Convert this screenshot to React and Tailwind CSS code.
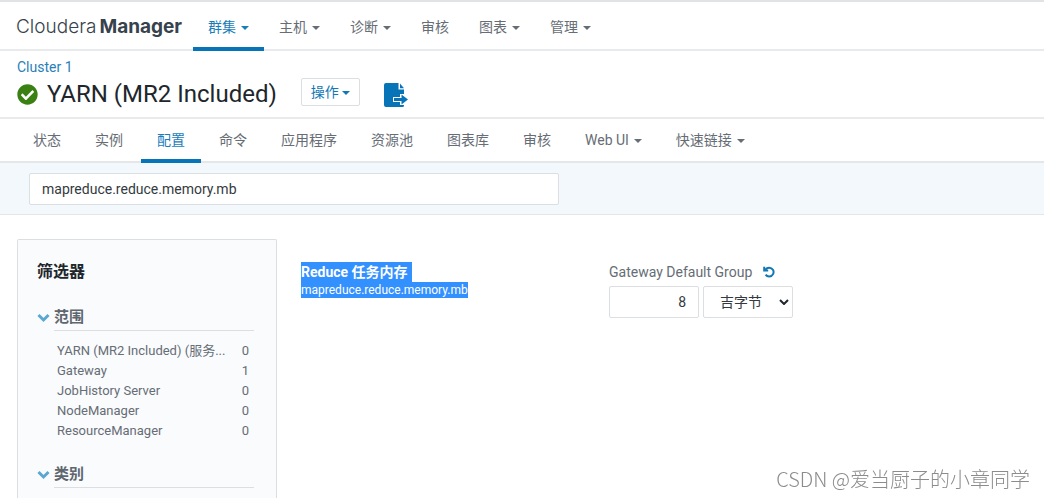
import { FaCheckCircle } from 'react-icons/fa'
import clsx from 'clsx'

const NAV_ITEMS = [
  { label: '群集', menu: true, active: true },
  { label: '主机', menu: true },
  { label: '诊断', menu: true },
  { label: '审核' },
  { label: '图表', menu: true },
  { label: '管理', menu: true },
]

const TABS = [
  { label: '状态' },
  { label: '实例' },
  { label: '配置', active: true },
  { label: '命令' },
  { label: '应用程序' },
  { label: '资源池' },
  { label: '图表库' },
  { label: '审核' },
  { label: 'Web UI', menu: true },
  { label: '快速链接', menu: true },
]

const SCOPES = [
  { label: 'YARN (MR2 Included) (服务...', count: 0 },
  { label: 'Gateway', count: 1 },
  { label: 'JobHistory Server', count: 0 },
  { label: 'NodeManager', count: 0 },
  { label: 'ResourceManager', count: 0 },
]

export default function App() {
  return (
    <div className="flex min-h-screen flex-col border-t-2 border-[#e2e3e4] bg-white font-[Roboto,'Noto_Sans_CJK_SC',sans-serif] text-sm text-[#666d75]">
      <header className="flex h-[49px] items-stretch border-b-2 border-[#e9eaeb] pl-4">
        <a href="#" className="flex w-[177px] shrink-0 items-center gap-[3px] pt-0.5 whitespace-nowrap font-[Inter,sans-serif] text-[19px] text-[#36424c]">
          <span className="font-light">Cloudera</span>
          <span className="font-bold">Manager</span>
        </a>
        <nav className="flex">
          {NAV_ITEMS.map((item) => (
            <NavLink key={item.label} {...item} className="px-[15px] pt-[5px]" />
          ))}
        </nav>
      </header>

      <section className="flex h-[68px] items-start border-b-2 border-[#e9eaeb] pl-[17px]">
        <div>
          <a href="#" className="mt-1.5 block leading-5 text-[#2a7fb8]">Cluster 1</a>
          <h1 className="flex items-center gap-[9px] whitespace-nowrap text-2xl leading-[34px] text-[#20262b]">
            <FaCheckCircle className="size-[21px] text-[#3b8012]" />
            YARN (MR2 Included)
          </h1>
        </div>
        <button className="mt-[27px] ml-6 flex h-7 items-center gap-[3px] rounded-xs border border-[#dcdfe2] px-[9px] text-[#1277b5]">
          操作 <Caret />
        </button>
        <button aria-label="导出" className="mt-8 ml-6">
          <ExportIcon />
        </button>
      </section>

      <nav className="flex h-11 gap-0.5 border-b-2 border-[#e4e6e8] pl-[17px]">
        {TABS.map((tab) => (
          <NavLink key={tab.label} {...tab} className="px-4 pt-0.5" />
        ))}
      </nav>

      <div className="border-b border-[#e2e7ea] bg-[#f3f8fc] px-[29px] pt-[10px] pb-[9px]">
        <input
          aria-label="搜索"
          defaultValue="mapreduce.reduce.memory.mb"
          className="block h-8 w-full max-w-[530px] rounded-xs border border-[#dcdfe2] bg-white px-3 text-[#343a40] outline-none"
        />
      </div>

      <main className="flex flex-1 items-stretch pt-6 pl-[17px]">
        <aside className="w-[260px] shrink-0 rounded-t-xs border border-b-0 border-[#dcdfe2] bg-[#fafbfd] pt-5 pr-[22px] pl-[19px]">
          <h2 className="text-base leading-6 font-bold text-[#20262b]">筛选器</h2>
          <FilterGroup title="范围">
            {SCOPES.map((s) => (
              <li key={s.label} className="flex justify-between leading-5">
                <span className="whitespace-nowrap">{s.label}</span>
                <span>{s.count}</span>
              </li>
            ))}
          </FilterGroup>
          <FilterGroup title="类别" />
        </aside>

        <section className="flex flex-1 items-start pt-[23px] pl-6">
          <div className="flex w-[308px] flex-col items-start text-white">
            <strong className="bg-[#3390ff] pr-1 leading-5 font-bold">Reduce 任务内存</strong>
            <span className="bg-[#3390ff] text-xs leading-4">mapreduce.reduce.memory.mb</span>
          </div>
          <div>
            <div className="flex items-center gap-[11px] leading-5">
              <label htmlFor="memory">Gateway Default Group</label>
              <button aria-label="重置">
                <UndoIcon />
              </button>
            </div>
            <div className="mt-1 flex gap-1 text-[#343a40]">
              <input
                id="memory"
                defaultValue="8"
                className="h-8 w-[90px] rounded-xs border border-[#dcdfe2] px-3 text-right outline-none"
              />
              <div className="relative">
                <select
                  aria-label="单位"
                  className="h-8 w-[90px] appearance-none rounded-xs border border-[#dcdfe2] bg-white pl-4 outline-none"
                >
                  <option>吉字节</option>
                </select>
                <svg viewBox="0 0 10 6" className="pointer-events-none absolute top-[13px] right-1 h-[6px] w-[10px]" fill="none" stroke="#20262b" strokeWidth="2">
                  <path d="M1 1l4 4 4-4" />
                </svg>
              </div>
            </div>
          </div>
        </section>
      </main>

      <p className="fixed right-[14px] bottom-[5px] font-['Noto_Sans_CJK_SC',sans-serif] text-xl leading-7 font-light text-[#8c8c8c]">
        CSDN @爱当厨子的小章同学
      </p>
    </div>
  )
}

function NavLink({ label, menu, active, className }) {
  return (
    <a
      href="#"
      className={clsx(
        '-mb-0.5 flex items-center gap-[5px] border-b-4 whitespace-nowrap',
        active ? 'border-b-[#0774b8] text-[#1a7dba]' : 'border-b-transparent',
        className,
      )}
    >
      {label}
      {menu && <Caret />}
    </a>
  )
}

function FilterGroup({ title, children }) {
  return (
    <div className="mt-[21px]">
      <h3 className="flex items-center gap-1 pb-px text-[15px] leading-6 font-bold text-[#5e666e]">
        <svg viewBox="0 0 13 13" className="size-[13px]" fill="none" stroke="#5ba7d3" strokeWidth="3">
          <path d="M1.500 4l5 5 5-5" />
        </svg>
        {title}
      </h3>
      <ul className="ml-[17px] border-t border-[#dcdfe2] pt-[10px] pr-[5px] pb-[21px] pl-[3px] -mb-[21px] text-[13px]">
        {children}
      </ul>
    </div>
  )
}

function Caret() {
  return (
    <svg viewBox="0 0 8 4" className="mt-0.5 h-1 w-2" fill="currentColor">
      <path d="M0 0h8L4 4z" />
    </svg>
  )
}

function ExportIcon() {
  return (
    <svg viewBox="0 0 24 24" className="size-6" fill="#0774b8">
      <path d="M2 0h12.500v6.500H20V11h-4v3H9v5h7v3h4v.5a1.500 1.500 0 0 1-1.500 1.500H2a2 2 0 0 1-2-2V2a2 2 0 0 1 2-2z" />
      <path d="M16 0.500L20 5.300h-4z" />
      <path d="M10 15h7.500v-3.500l6.500 5-6.500 5V18H10z" />
    </svg>
  )
}

// counter-clockwise arrow, open on the left
function UndoIcon() {
  return (
    <svg viewBox="0 0 12 12" className="size-3" fill="none" stroke="#1277b5" strokeWidth="2">
      <path d="M1.200 0.800V4.600H5.200" />
      <path d="M2 4.200C3 2.400 4.600 1.700 6.200 1.700a4.400 4.400 0 1 1-3.600 7" />
    </svg>
  )
}
